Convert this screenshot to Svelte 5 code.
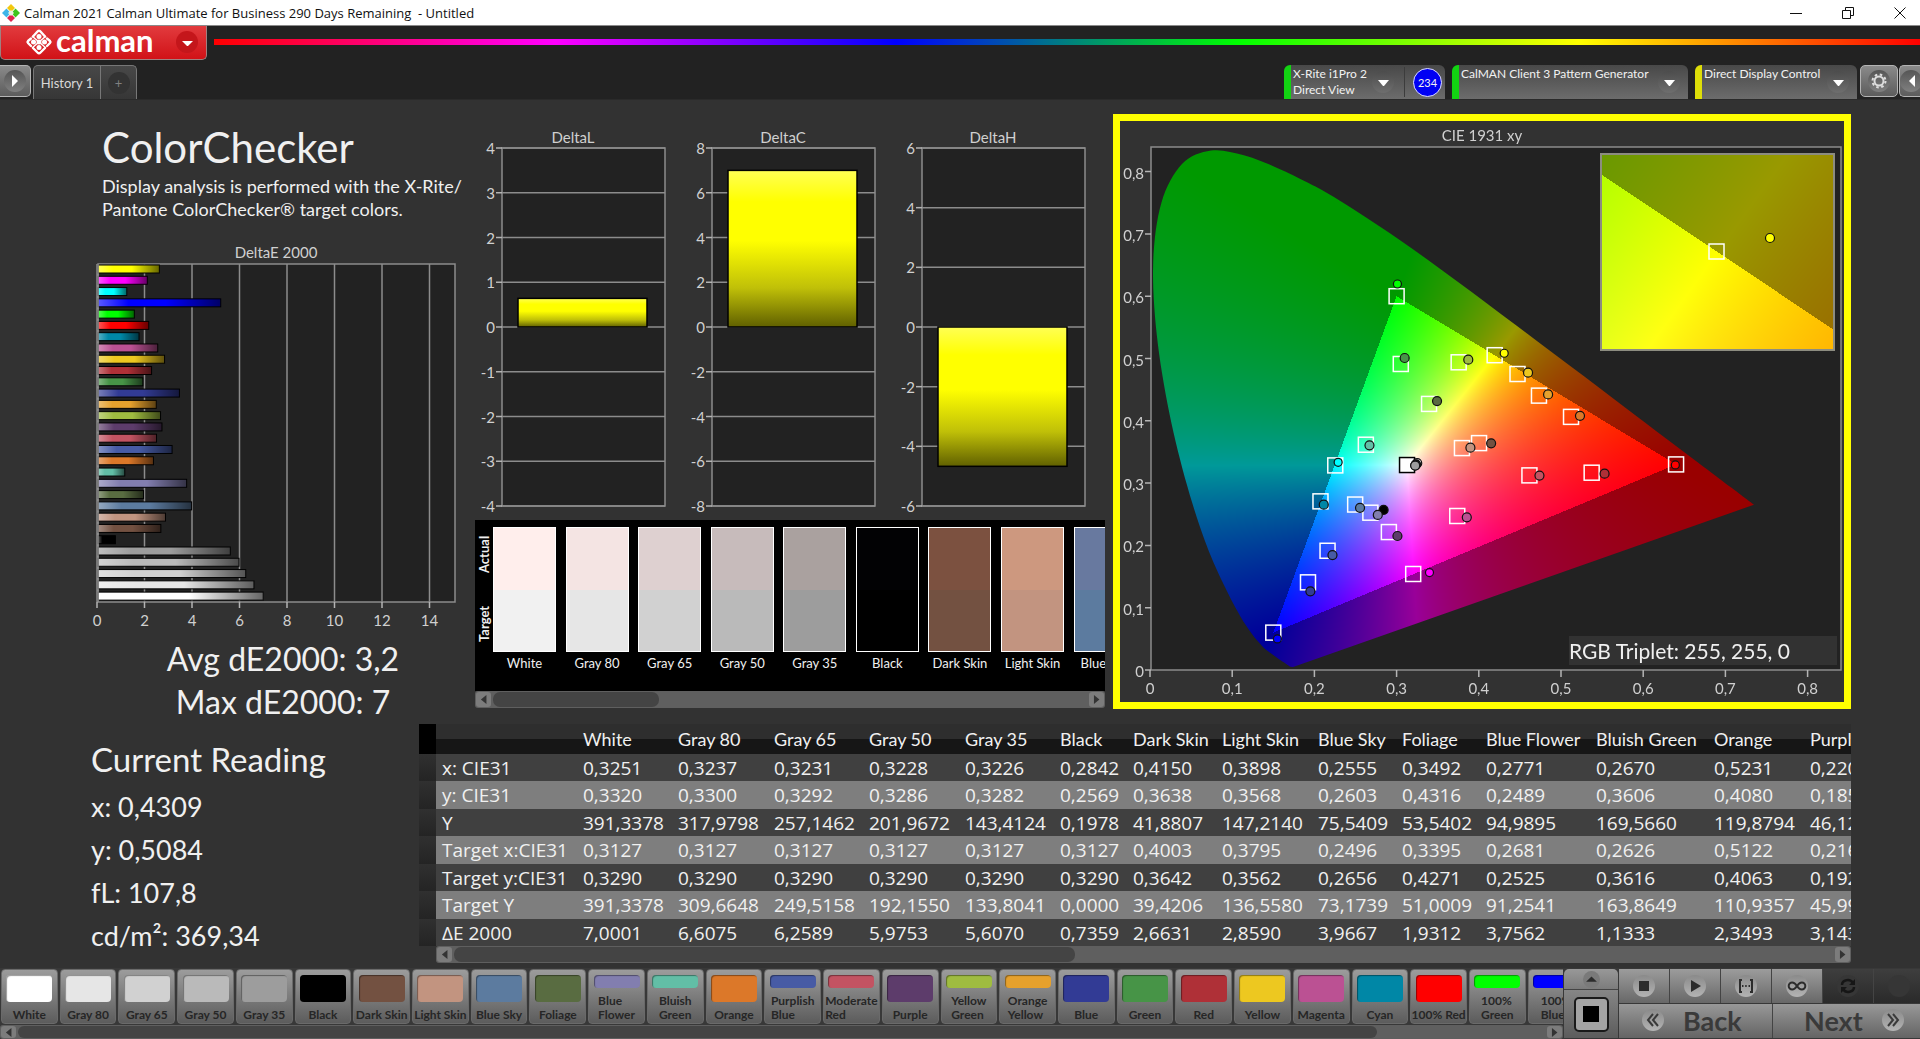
<script>
  import { onMount } from 'svelte';

  // target / actual are CIE 1931 xy pairs
  const patches = [
    { name: 'White', color: '#ffffff', de: 7.0001, target: [0.3127, 0.329], actual: [0.3251, 0.332] },
    { name: 'Gray 80', color: '#e6e6e6', de: 6.6075, target: [0.3127, 0.329], actual: [0.3237, 0.33] },
    { name: 'Gray 65', color: '#d1d1d1', de: 6.2589, target: [0.3127, 0.329], actual: [0.3231, 0.3292] },
    { name: 'Gray 50', color: '#bababa', de: 5.9753, target: [0.3127, 0.329], actual: [0.3228, 0.3286] },
    { name: 'Gray 35', color: '#9d9d9d', de: 5.607, target: [0.3127, 0.329], actual: [0.3226, 0.3282] },
    { name: 'Black', color: '#000000', de: 0.7359, target: [0.3127, 0.329], actual: [0.2842, 0.2569] },
    { name: 'Dark Skin', color: '#735141', de: 2.6631, target: [0.4003, 0.3642], actual: [0.415, 0.3638] },
    { name: 'Light Skin', color: '#c29480', de: 2.859, target: [0.3795, 0.3562], actual: [0.3898, 0.3568] },
    { name: 'Blue Sky', color: '#5c7b9f', de: 3.9667, target: [0.2496, 0.2656], actual: [0.2555, 0.2603] },
    { name: 'Foliage', color: '#596c41', de: 1.9312, target: [0.3395, 0.4271], actual: [0.3492, 0.4316] },
    { name: 'Blue\nFlower', color: '#827eaf', de: 3.7562, target: [0.2681, 0.2525], actual: [0.2771, 0.2489] },
    { name: 'Bluish\nGreen', color: '#62bea6', de: 1.1333, target: [0.2626, 0.3616], actual: [0.267, 0.3606] },
    { name: 'Orange', color: '#dc7829', de: 2.3493, target: [0.5122, 0.4063], actual: [0.5231, 0.408] },
    { name: 'Purplish\nBlue', color: '#475ba5', de: 3.14, target: [0.216, 0.1914], actual: [0.222, 0.1844] },
    { name: 'Moderate\nRed', color: '#c35362', de: 2.48, target: [0.4616, 0.3124], actual: [0.4738, 0.3121] },
    { name: 'Purple', color: '#5d3c6b', de: 2.71, target: [0.2906, 0.2214], actual: [0.301, 0.2151] },
    { name: 'Yellow\nGreen', color: '#9fbc40', de: 2.65, target: [0.3755, 0.4939], actual: [0.3872, 0.4981] },
    { name: 'Orange\nYellow', color: '#e6a12d', de: 2.47, target: [0.4732, 0.4404], actual: [0.4843, 0.4424] },
    { name: 'Blue', color: '#323b95', de: 3.45, target: [0.1922, 0.1407], actual: [0.1951, 0.1263] },
    { name: 'Green', color: '#479447', de: 1.9, target: [0.3051, 0.4912], actual: [0.3098, 0.5008] },
    { name: 'Red', color: '#af3037', de: 2.27, target: [0.5373, 0.3167], actual: [0.553, 0.3151] },
    { name: 'Yellow', color: '#edc820', de: 2.82, target: [0.4471, 0.4751], actual: [0.4599, 0.4772] },
    { name: 'Magenta', color: '#bb5193', de: 2.53, target: [0.3738, 0.2472], actual: [0.3854, 0.2451] },
    { name: 'Cyan', color: '#0087a6', de: 1.74, target: [0.2074, 0.2707], actual: [0.2114, 0.2654] },
    { name: '100% Red', color: '#ff0000', de: 2.15, target: [0.64, 0.33], actual: [0.6391, 0.3291] },
    { name: '100%\nGreen', color: '#00ff00', de: 1.54, target: [0.3, 0.6], actual: [0.301, 0.6196] },
    { name: '100%\nBlue', color: '#0000ff', de: 5.2, target: [0.15, 0.06], actual: [0.155, 0.0498] },
    { name: '100%\nCyan', color: '#00ffff', de: 1.22, target: [0.2254, 0.3284], actual: [0.2289, 0.3334] },
    { name: '100%\nMagenta', color: '#ff00ff', de: 2.09, target: [0.3202, 0.1541], actual: [0.34, 0.1564] },
    { name: '100%\nYellow', color: '#ffff00', de: 2.6, target: [0.4193, 0.5053], actual: [0.4309, 0.5084] }
  ];

  const bars = [...patches].reverse();

  const deltas = [
    { name: 'DeltaL', max: 4, step: 1, value: 0.64 },
    { name: 'DeltaC', max: 8, step: 2, value: 7 },
    { name: 'DeltaH', max: 6, step: 2, value: -4.67 }
  ];

  const swatches = [
    { name: 'White', actual: '#ffeeec', target: '#f1f1f1' },
    { name: 'Gray 80', actual: '#f4e4e3', target: '#e6e6e6' },
    { name: 'Gray 65', actual: '#ded0d0', target: '#d1d1d1' },
    { name: 'Gray 50', actual: '#c7bbbb', target: '#bababa' },
    { name: 'Gray 35', actual: '#aaa19f', target: '#9d9d9d' },
    { name: 'Black', actual: '#020204', target: '#000000' },
    { name: 'Dark Skin', actual: '#7c5140', target: '#735141' },
    { name: 'Light Skin', actual: '#cd987f', target: '#c29480' },
    { name: 'Blue Sky', actual: '#68799f', target: '#5c7b9f' }
  ];

  const columns = ['White', 'Gray 80', 'Gray 65', 'Gray 50', 'Gray 35', 'Black', 'Dark Skin', 'Light Skin', 'Blue Sky', 'Foliage', 'Blue Flower', 'Bluish Green', 'Orange', 'Purplish Blue'];
  const columnWidths = [17, 141, 95, 96, 95, 96, 95, 73, 89, 96, 84, 84, 110, 118, 96, 120];

  const rows = [
    ['x: CIE31', '0,3251', '0,3237', '0,3231', '0,3228', '0,3226', '0,2842', '0,4150', '0,3898', '0,2555', '0,3492', '0,2771', '0,2670', '0,5231', '0,2207'],
    ['y: CIE31', '0,3320', '0,3300', '0,3292', '0,3286', '0,3282', '0,2569', '0,3638', '0,3568', '0,2603', '0,4316', '0,2489', '0,3606', '0,4080', '0,1856'],
    ['Y', '391,3378', '317,9798', '257,1462', '201,9672', '143,4124', '0,1978', '41,8807', '147,2140', '75,5409', '53,5402', '94,9895', '169,5660', '119,8794', '46,1280'],
    ['Target x:CIE31', '0,3127', '0,3127', '0,3127', '0,3127', '0,3127', '0,3127', '0,4003', '0,3795', '0,2496', '0,3395', '0,2681', '0,2626', '0,5122', '0,2160'],
    ['Target y:CIE31', '0,3290', '0,3290', '0,3290', '0,3290', '0,3290', '0,3290', '0,3642', '0,3562', '0,2656', '0,4271', '0,2525', '0,3616', '0,4063', '0,1920'],
    ['Target Y', '391,3378', '309,6648', '249,5158', '192,1550', '133,8041', '0,0000', '39,4206', '136,5580', '73,1739', '51,0009', '91,2541', '163,8649', '110,9357', '45,9900'],
    ['ΔE 2000', '7,0001', '6,6075', '6,2589', '5,9753', '5,6070', '0,7359', '2,6631', '2,8590', '3,9667', '1,9312', '3,7562', '1,1333', '2,3493', '3,1430']
  ];

  const readings = ['x: 0,4309', 'y: 0,5084', 'fL: 107,8', 'cd/m²: 369,34'];

  // spectral locus, 380 to 700 nm
  const locus = [
    [0.1741, 0.005], [0.1714, 0.0051], [0.1689, 0.0069], [0.1644, 0.0109], [0.1566, 0.0177], [0.144, 0.0297],
    [0.1355, 0.0399], [0.1241, 0.0578], [0.1096, 0.0868], [0.0913, 0.1327], [0.0687, 0.2007], [0.0454, 0.295],
    [0.0235, 0.4127], [0.0082, 0.5384], [0.0039, 0.6548], [0.0139, 0.7502], [0.0389, 0.812], [0.0743, 0.8338],
    [0.1142, 0.8262], [0.1547, 0.8059], [0.1929, 0.7816], [0.2296, 0.7543], [0.3016, 0.6923], [0.3731, 0.6245],
    [0.4441, 0.5547], [0.5125, 0.4866], [0.5752, 0.4242], [0.627, 0.3725], [0.6658, 0.334], [0.6915, 0.3083],
    [0.7079, 0.292], [0.719, 0.2809], [0.726, 0.274], [0.7347, 0.2653]
  ];

  const W = 724;
  const H = 581;
  const inset = { x: 481, y: 33, w: 233, h: 196, cx: 0.4193, cy: 0.5053, span: 0.05 };

  const px = (x) => 30 + x * 822;
  const py = (y) => 549 - y * 623;

  let canvas;

  function xyColor(x, y) {
    if (y < 0.001) y = 0.001;
    const X = x / y;
    const Z = (1 - x - y) / y;
    const rgb = [
      3.2406 * X - 1.5372 - 0.4986 * Z,
      -0.9689 * X + 1.8758 + 0.0415 * Z,
      0.0557 * X - 0.204 + 1.057 * Z
    ];
    const outside = Math.min(...rgb) < 0;
    const peak = Math.max(...rgb);
    const scale = outside ? 153 : 255;
    return rgb.map((c) => (scale * Math.max(c, 0)) / peak);
  }

  function paint(w, h, toXY) {
    const layer = document.createElement('canvas');
    layer.width = w;
    layer.height = h;
    const ctx = layer.getContext('2d');
    const img = ctx.createImageData(w, h);
    for (let j = 0; j < h; j++) {
      for (let i = 0; i < w; i++) {
        const [x, y] = toXY(i + 0.5, j + 0.5);
        const [r, g, b] = xyColor(x, y);
        const k = (j * w + i) * 4;
        img.data[k] = r;
        img.data[k + 1] = g;
        img.data[k + 2] = b;
        img.data[k + 3] = 255;
      }
    }
    ctx.putImageData(img, 0, 0);
    return layer;
  }

  onMount(() => {
    const ctx = canvas.getContext('2d');
    const pts = locus.map(([x, y]) => [px(x), py(y)]);
    ctx.save();
    ctx.beginPath();
    ctx.moveTo(...pts[0]);
    // Catmull-Rom through every locus point
    for (let i = 0; i < pts.length - 1; i++) {
      const a = pts[Math.max(i - 1, 0)];
      const b = pts[i];
      const c = pts[i + 1];
      const d = pts[Math.min(i + 2, pts.length - 1)];
      ctx.bezierCurveTo(
        b[0] + (c[0] - a[0]) / 6, b[1] + (c[1] - a[1]) / 6,
        c[0] - (d[0] - b[0]) / 6, c[1] - (d[1] - b[1]) / 6,
        c[0], c[1]
      );
    }
    ctx.closePath();
    ctx.clip();
    ctx.drawImage(paint(W, H, (i, j) => [(i - 30) / 822, (549 - j) / 623]), 0, 0);
    ctx.restore();

    const zoomed = paint(inset.w, inset.h, (i, j) => [
      inset.cx + (i / inset.w - 0.5) * inset.span,
      inset.cy - (j / inset.h - 0.5) * inset.span
    ]);
    ctx.drawImage(zoomed, inset.x, inset.y);
  });

  function ticks(d) {
    const out = [];
    for (let v = d.max; v >= -d.max; v -= d.step) out.push(v);
    return out;
  }

  const dy = (d, v) => 201 - (v / d.max) * 179;
  const label = (v) => String(v).replace('.', ',');
</script>

{#snippet scrollbar(name, size)}
  <div class="scrollbar">
    <button type="button" class="arrow" aria-label="Scroll {name} left">
      <svg viewBox="0 0 8 12"><path d="M7 1v10L1 6z" /></svg>
    </button>
    <div class="track"><div class="thumb" style="width: {size}%"></div></div>
    <button type="button" class="arrow" aria-label="Scroll {name} right">
      <svg viewBox="0 0 8 12"><path d="M1 1v10l6-5z" /></svg>
    </button>
  </div>
{/snippet}

{#snippet caret()}
  <span class="caret"><svg viewBox="0 0 22 22"><path d="M6 9h11l-5 6h-1z" /></svg></span>
{/snippet}

<div class="app">
  <header class="titlebar">
    <svg class="app-icon" viewBox="0 0 18 18">
      <path d="M9 0l4 4-4 4-4-4z" fill="#f2c80f" />
      <path d="M4.500 4.500l4 4.500-4 4.500L0 9z" fill="#3fb4e8" />
      <path d="M13.500 4.500L18 9l-4.500 4.500-4-4.500z" fill="#3fc41c" />
      <path d="M9 10l4 4-4 4-4-4z" fill="#e0244f" />
      <path d="M9 6l3 3-3 3-3-3z" fill="#e9efe0" />
    </svg>
    <span class="caption">Calman 2021 Calman Ultimate for Business 290 Days Remaining&nbsp; - Untitled</span>
    <button type="button" aria-label="Minimize"><svg viewBox="0 0 12 12"><path d="M0 6.500h12" /></svg></button>
    <button type="button" aria-label="Restore"><svg viewBox="0 0 12 12"><path d="M0.500 3.500h8v8h-8zM3.500 3.500v-3h8v8h-3" /></svg></button>
    <button type="button" aria-label="Close"><svg viewBox="0 0 12 12"><path d="M0.500 0.500l11 11M11.500 0.500l-11 11" /></svg></button>
  </header>

  <div class="brand-row">
    <button type="button" class="brand">
      <svg class="brand-mark" viewBox="0 0 28 28">
        <path
          d="M8 8.500L12.500 3.500Q14 2 15.500 3.500L20 8.500M22 10.500L25 13Q26 14 25 15L22 18M20 20L15.500 24.500Q14 26 12.500 24.500L8 20M6 18L3 15Q2 14 3 13L6 10.500"
          fill="none"
          stroke="#fff"
          stroke-width="2.400"
          stroke-linejoin="round"
          stroke-linecap="round"
        />
        <path d="M7 8l14 12M21 8L7 20" stroke="#fff" stroke-width="1.500" />
        <g fill="#fff">
          <circle cx="14" cy="8.500" r="2.500" /><circle cx="8.500" cy="14" r="2.500" /><circle cx="14" cy="14" r="2.500" />
          <circle cx="19.500" cy="14" r="2.500" /><circle cx="14" cy="19.500" r="2.500" />
        </g>
      </svg>
      <span class="wordmark">calman</span>
      <span class="brand-caret"><svg viewBox="0 0 22 22"><path d="M6 10h11l-5 5h-1z" /></svg></span>
    </button>
    <div class="rainbow"></div>
  </div>

  <div class="tabs">
    <button type="button" class="side-button left" aria-label="Open panel">
      <span class="knob"><svg viewBox="0 0 22 22"><path d="M8 5v12l6-6z" fill="#fff" /></svg></span>
    </button>
    <div class="tab-group">
      <button type="button" class="tab">History 1</button>
      <button type="button" class="tab add" aria-label="Add history"><span>+</span></button>
    </div>
    <div class="devices">
      <button type="button" class="device meter">
        <span class="device-text">X-Rite i1Pro 2<br />Direct View</span>
        {@render caret()}
        <span class="count"><b>234</b></span>
      </button>
      <button type="button" class="device source">
        <span class="device-text">CalMAN Client 3 Pattern Generator</span>
        {@render caret()}
      </button>
      <button type="button" class="device display">
        <span class="device-text">Direct Display Control</span>
        {@render caret()}
      </button>
    </div>
    <button type="button" class="side-button" aria-label="Settings">
      <span class="knob">
        <svg viewBox="0 0 22 22" fill="none" stroke="#ddd">
          <circle cx="11" cy="11" r="4.500" stroke-width="2" />
          <circle cx="11" cy="11" r="6.500" stroke-width="2" stroke-dasharray="2.550 2.550" />
        </svg>
      </span>
    </button>
    <button type="button" class="side-button cut" aria-label="Collapse panel">
      <span class="knob"><svg viewBox="0 0 22 22"><path d="M15 5v12l-6-6z" fill="#fff" /></svg></span>
    </button>
  </div>

  <main>
    <div class="upper">
      <section class="summary">
        <h1>ColorChecker</h1>
        <p class="intro">Display analysis is performed with the X-Rite/<br />Pantone ColorChecker® target colors.</p>

        <svg class="chart delta-e" width="475" height="394" viewBox="0 0 475 394">
          <defs>
            <linearGradient id="sheen-x">
              <stop offset="0" stop-color="#fff" stop-opacity="0.350" />
              <stop offset="0.250" stop-color="#fff" stop-opacity="0" />
              <stop offset="0.550" stop-color="#000" stop-opacity="0" />
              <stop offset="1" stop-color="#000" stop-opacity="0.600" />
            </linearGradient>
          </defs>
          <text x="276" y="18" text-anchor="middle">DeltaE 2000</text>
          <rect class="plot" x="98" y="24" width="357" height="338" />
          {#each [0, 2, 4, 6, 8, 10, 12, 14] as v}
            <path class="grid" d="M{97 + v * 23.75} 24V362" />
            <path class="tick" d="M{97 + v * 23.75} 362v6" />
            <text x={97 + v * 23.75} y="386" text-anchor="middle">{v}</text>
          {/each}
          {#each bars as p, i}
            <rect x="98" y={25 + i * 11.28} width={p.de * 23.6} height="8" fill={p.color} />
            <rect x="98" y={25 + i * 11.28} width={p.de * 23.6} height="8" fill="url(#sheen-x)" stroke="#000" stroke-width="1" />
          {/each}
          <path class="grid" d="M98 24V362" />
        </svg>

        <p class="total">Avg dE2000: 3,2</p>
        <p class="total">Max dE2000: 7</p>
      </section>

      <section class="middle">
        <div class="delta-charts">
          {#each deltas as d}
            <svg class="chart" width="196" height="394" viewBox="0 0 196 394">
              <defs>
                <linearGradient id="yellow-{d.name}" x2="0" y2="1">
                  <stop offset="0" stop-color="#ffff54" />
                  <stop offset="0.200" stop-color="#ffff00" />
                  <stop offset="0.450" stop-color="#ffff00" />
                  <stop offset="0.750" stop-color="#c0c008" />
                  <stop offset="1" stop-color="#606000" />
                </linearGradient>
              </defs>
              <text x="98" y="17" text-anchor="middle">{d.name}</text>
              <rect class="plot" x="27" y="22" width="163" height="358" />
              {#each ticks(d) as v}
                <path class="grid" d="M27 {dy(d, v)}H190" />
                <path class="tick" d="M21 {dy(d, v)}h6" />
                <text x="20" y={dy(d, v) + 6} text-anchor="end">{v}</text>
              {/each}
              <rect
                x="43"
                y={dy(d, Math.max(d.value, 0))}
                width="129"
                height={(Math.abs(d.value) / d.max) * 179}
                fill="url(#yellow-{d.name})"
                stroke="#000"
                stroke-width="1.500"
              />
            </svg>
          {/each}
        </div>

        <div class="swatch-panel">
          <div class="swatch-sides"><span>Actual</span><span>Target</span></div>
          <div class="swatch-list">
            {#each swatches as s}
              <div class="swatch">
                <div class="pair" style="background: linear-gradient({s.actual} 50%, {s.target} 50%)"></div>
                <span>{s.name}</span>
              </div>
            {/each}
          </div>
        </div>
        {@render scrollbar('swatches', 28)}
      </section>

      <section class="cie">
        <canvas bind:this={canvas} width={W} height={H}></canvas>
        <svg class="chart" viewBox="0 0 {W} {H}">
          <text x="362" y="20" text-anchor="middle">CIE 1931 xy</text>
          <rect class="frame" x="31" y="26" width="690" height="523" />
          {#each [0, 0.1, 0.2, 0.3, 0.4, 0.5, 0.6, 0.7, 0.8] as v}
            <path class="tick" d="M{px(v)} 549v7M31 {py(v)}h-6" />
            <text x={px(v)} y="573" text-anchor="middle">{label(v)}</text>
            <text x="24" y={py(v) + 7} text-anchor="end">{label(v)}</text>
          {/each}

          {#each patches.slice(6) as p}
            <rect class="target" x={px(p.target[0]) - 7.5} y={py(p.target[1]) - 7.5} width="15" height="15" />
          {/each}
          {#each patches.slice(5) as p}
            <circle class="actual" cx={px(p.actual[0])} cy={py(p.actual[1])} r={p.name.includes('100%') ? 4 : 4.5} fill={p.color} />
          {/each}
          <rect class="target dark" x={px(0.3127) - 7.5} y={py(0.329) - 7.5} width="15" height="15" />
          {#each patches.slice(0, 5) as p}
            <circle class="actual" cx={px(p.actual[0])} cy={py(p.actual[1])} r="4.500" fill={p.color} />
          {/each}

          <rect class="inset" x={inset.x} y={inset.y} width={inset.w} height={inset.h} />
          <rect class="target" x="589" y="123" width="15" height="15" />
          <circle class="actual" cx="650" cy="117" r="4.500" fill="#ffff00" />

          <rect class="triplet-box" x="449" y="515" width="268" height="29" />
          <text class="triplet" x="449" y="538">RGB Triplet: 255, 255, 0</text>
        </svg>
      </section>
    </div>

    <div class="lower">
      <section class="readings">
        <h2>Current Reading</h2>
        {#each readings as r}
          <p>{r}</p>
        {/each}
      </section>

      <section class="data">
        <div class="table-clip">
          <table>
            <colgroup>
              {#each columnWidths as w}
                <col style="width: {w}px" />
              {/each}
            </colgroup>
            <thead>
              <tr>
                <th class="gutter"></th>
                <th></th>
                {#each columns as c}
                  <th scope="col">{c}</th>
                {/each}
              </tr>
            </thead>
            <tbody>
              {#each rows as row}
                <tr>
                  <td class="gutter"></td>
                  {#each row as cell}
                    <td>{cell}</td>
                  {/each}
                </tr>
              {/each}
            </tbody>
          </table>
        </div>
        <div class="data-scroll">{@render scrollbar('table', 45)}</div>
      </section>
    </div>
  </main>

  <footer>
    <div class="palette">
      <div class="patches">
        {#each patches as p}
          <button type="button" class="patch">
            <span class="well" style="background: {p.color}"></span>
            <span class="patch-name">{p.name}</span>
          </button>
        {/each}
      </div>
      {@render scrollbar('patches', 89)}
    </div>

    <div class="window-pick">
      <button type="button" class="up" aria-label="More patterns">
        <span class="round small"><svg viewBox="0 0 22 22"><path d="M4 14l7-7 7 7z" /></svg></span>
      </button>
      <button type="button" class="pattern" aria-label="Window pattern"><span><i></i></span></button>
    </div>

    <div class="controls">
      <div class="transport">
        <button type="button" aria-label="Stop"><span class="round"><svg viewBox="0 0 22 22"><path d="M6 6h10v10H6z" /></svg></span></button>
        <button type="button" aria-label="Play"><span class="round"><svg viewBox="0 0 22 22"><path d="M7 5l10 6-10 6z" /></svg></span></button>
        <button type="button" aria-label="Read series">
          <span class="round"><svg viewBox="0 0 22 22"><path d="M7 5H5v12h2M15 5h2v12h-2M7 11h1.500M10.200 11h1.500M13.500 11h1.500" fill="none" stroke="#2c2c2c" stroke-width="2" /></svg></span>
        </button>
        <button type="button" aria-label="Read continuously">
          <span class="round"><svg viewBox="0 0 22 22"><path d="M11 11C9 8 7.500 7.500 6.200 7.500a3.500 3.500 0 000 7C7.500 14.500 9 14 11 11s3.500-3.500 4.800-3.500a3.500 3.500 0 010 7C14.500 14.500 13 14 11 11z" fill="none" stroke="#2c2c2c" stroke-width="2" /></svg></span>
        </button>
        <button type="button" class="off" aria-label="Refresh">
          <span class="round"><svg viewBox="0 0 22 22"><path d="M5 10c0-5 8-7 11-2M17 12c0 5-8 7-11 2" fill="none" stroke="#161616" stroke-width="2.500" /><path d="M18 4v6h-6zM4 18v-6h6z" fill="#161616" /></svg></span>
        </button>
        <button type="button" class="off" aria-label="Record"><span class="round"></span></button>
      </div>
      <div class="nav">
        <button type="button">
          <span class="round"><svg viewBox="0 0 22 22"><path d="M11 5l-5 6 5 6M16 5l-5 6 5 6" fill="none" stroke="#3a3a3a" stroke-width="2" /></svg></span>
          Back
        </button>
        <button type="button" class="next">
          Next
          <span class="round"><svg viewBox="0 0 22 22"><path d="M6 5l5 6-5 6M11 5l5 6-5 6" fill="none" stroke="#3a3a3a" stroke-width="2" /></svg></span>
        </button>
      </div>
    </div>
  </footer>
</div>

<style>
  :global(body) {
    margin: 0;
    background: #323232;
  }

  .app {
    display: flex;
    flex-direction: column;
    min-height: 100vh;
    overflow: hidden;
    background: #323232;
    color: #f0f0f0;
    font-family: Lato, 'Liberation Sans', sans-serif;
  }

  .app * { box-sizing: border-box; }

  button {
    margin: 0;
    padding: 0;
    border: 0;
    background: none;
    color: inherit;
    font: inherit;
    cursor: pointer;
  }

  svg { display: block; }

  h1, h2, p { margin: 0; font-weight: 400; }

  /* title bar */
  .titlebar {
    display: flex;
    align-items: center;
    height: 26px;
    padding-left: 2px;
    border-bottom: 1px solid #8a8a8a;
    background: #fff;
    color: #111;
    font-family: 'Open Sans', 'Noto Sans', sans-serif;
    font-size: 13px;
  }

  .app-icon { width: 18px; height: 18px; margin-right: 4px; }

  .caption { flex: 1; white-space: nowrap; }

  .titlebar button {
    display: flex;
    justify-content: center;
    width: 52px;
  }

  .titlebar button:last-child { width: 46px; padding-left: 6px; }

  .titlebar button svg {
    width: 12px;
    height: 12px;
    fill: none;
    stroke: #111;
    stroke-width: 1;
  }

  /* brand */
  .brand-row {
    display: flex;
    height: 39px;
    background: #222;
  }

  .brand {
    display: flex;
    align-items: center;
    width: 207px;
    height: 34px;
    padding: 0 8px 2px 24px;
    border: 1px solid #a08080;
    border-top: 0;
    border-radius: 0 0 5px 5px;
    background: linear-gradient(#e23b3e, #d11217);
    color: #fff;
  }

  .brand-mark { width: 28px; height: 28px; }

  .wordmark {
    flex: 1;
    padding: 0 0 4px 3px;
    font-size: 31px;
    font-weight: 700;
    line-height: 28px;
    text-align: left;
  }

  .brand-caret {
    width: 22px;
    height: 22px;
    border-radius: 50%;
    background: #c4161b;
  }

  .brand-caret svg, .caret svg { fill: #fff; }

  .rainbow {
    flex: 1;
    height: 6px;
    margin: 13px 0 0 7px;
    background: linear-gradient(90deg, #f00, #f0f, #00f, #0f0, #ff0, #f00);
  }

  /* tabs */
  .tabs {
    display: flex;
    height: 34px;
    background: #222;
  }

  .side-button {
    display: flex;
    align-items: center;
    justify-content: center;
    width: 38px;
    height: 32px;
    border: 1px solid #b4b4b4;
    border-radius: 5px;
    background: linear-gradient(#8a8a8a, #5c5c5c);
  }

  .side-button.left {
    width: 31px;
    border-left: 0;
    border-radius: 0 5px 5px 0;
  }

  .side-button.cut {
    justify-content: flex-start;
    width: 21px;
    margin-left: 1px;
    border-right: 0;
    border-radius: 5px 0 0 5px;
    overflow: hidden;
  }

  .knob {
    flex: none;
    width: 22px;
    height: 22px;
    border-radius: 50%;
    background: linear-gradient(#555, #808080);
  }

  .tab-group {
    display: flex;
    margin-left: 2px;
    border: 1px solid #777;
    border-bottom: 0;
    border-radius: 5px 5px 0 0;
    background: linear-gradient(#484848, #363636);
  }

  .tab {
    width: 66px;
    color: #d8d8d8;
    font-size: 13px;
    white-space: nowrap;
  }

  .tab.add {
    display: flex;
    align-items: center;
    justify-content: center;
    width: 36px;
    border-left: 1px solid #777;
  }

  .tab.add span {
    width: 22px;
    height: 22px;
    border-radius: 50%;
    background: #333;
    color: #808080;
    font-size: 13px;
    line-height: 22px;
  }

  .devices {
    display: flex;
    gap: 7px;
    margin-left: auto;
    padding-right: 3px;
  }

  .device {
    display: flex;
    align-items: center;
    padding: 0 8px 0 2px;
    border-left: 7px solid #12d312;
    border-radius: 6px 6px 0 0;
    background: linear-gradient(#484848, #6c6c6c);
    color: #f2f2f2;
    font-size: 12px;
  }

  .device.meter { width: 161px; padding-right: 3px; }
  .device.source { width: 236px; }
  .device.display { width: 162px; border-left-color: #dede08; }

  .device-text {
    flex: 1;
    align-self: flex-start;
    padding-top: 1px;
    line-height: 16px;
    text-align: left;
    white-space: nowrap;
  }

  .caret {
    width: 22px;
    height: 22px;
    border-radius: 50%;
    background: linear-gradient(#4c4c4c, #6e6e6e);
  }

  .count {
    display: flex;
    align-items: center;
    height: 30px;
    margin-left: 10px;
    padding-left: 8px;
    border-left: 1px solid #3c3c3c;
  }

  .count b {
    width: 29px;
    height: 29px;
    border: 1px solid #e0e0ff;
    border-radius: 50%;
    background: #0000f4;
    font-size: 11px;
    font-weight: 400;
    line-height: 27px;
    text-align: center;
  }

  /* workspace */
  main {
    flex: 1;
    padding-right: 69px;
    border-top: 1px solid #2a2a2a;
  }

  .upper {
    display: grid;
    grid-template-columns: 475px 630px minmax(0, 1fr);
  }

  .summary { padding: 22px 0 1px; }

  h1 {
    padding-left: 102px;
    font-size: 42px;
    line-height: 50px;
  }

  .intro {
    margin: 3px 0 19px;
    padding-left: 102px;
    font-size: 18px;
    line-height: 23px;
    white-space: nowrap;
  }

  .total {
    padding-left: 91px;
    font-size: 32px;
    line-height: 43px;
    text-align: center;
  }

  .chart {
    fill: #d0d0d0;
    font-size: 15px;
  }

  .delta-e { margin-bottom: 3px; }

  .plot { fill: #222; stroke: #8c8c8c; stroke-width: 1.5; }
  .frame { fill: none; stroke: #8c8c8c; stroke-width: 1.5; }
  .grid { stroke: #8c8c8c; stroke-width: 1.5; }
  .tick { stroke: #b4b4b4; stroke-width: 1.5; }

  .middle { padding-top: 26px; }

  .delta-charts { display: flex; gap: 14px; }

  .swatch-panel {
    display: flex;
    height: 171px;
    background: #000;
    overflow: hidden;
  }

  .swatch-sides {
    display: flex;
    flex: none;
    flex-direction: column;
    width: 18px;
    height: 138px;
  }

  .swatch-sides span {
    flex: 1;
    font-size: 13px;
    font-weight: 700;
    line-height: 18px;
    text-align: center;
    writing-mode: vertical-rl;
    transform: rotate(180deg);
  }

  .swatch-list {
    display: grid;
    flex: 1;
    grid-auto-flow: column;
    grid-auto-columns: 11.86%;
    padding-top: 7px;
    overflow: hidden;
  }

  .swatch { font-size: 13px; white-space: nowrap; }

  .pair {
    width: 63px;
    height: 125px;
    border: 1px solid #fff;
  }

  .swatch span {
    display: block;
    width: 63px;
    line-height: 23px;
    text-align: center;
  }

  .scrollbar {
    display: flex;
    height: 17px;
    padding: 1px;
    gap: 2px;
    border-radius: 3px;
    background: #5f5f5f;
  }

  .arrow {
    display: flex;
    flex: none;
    align-items: center;
    justify-content: center;
    width: 15px;
    border-radius: 3px;
    background: #7c7c7c;
  }

  .arrow svg { height: 11px; fill: #333; }

  .track { flex: 1; }

  .thumb {
    height: 100%;
    border-radius: 7px;
    background: #444;
  }

  .cie {
    display: grid;
    align-self: start;
    margin: 14px 0 0 8px;
    border: 7px solid #ffff00;
    background: linear-gradient(#222, #222) 31px 26px / calc(100% - 34px) calc(100% - 58px) no-repeat;
  }

  .cie canvas, .cie svg {
    grid-area: 1 / 1;
    width: 100%;
    height: auto;
  }

  .target { fill: none; stroke: #fff; stroke-width: 1.5; }
  .target.dark { fill: #fff; stroke: #000; }
  .actual { stroke: #111; stroke-width: 1.2; }
  .inset { fill: none; stroke: #8c8c80; stroke-width: 2; }
  .triplet-box { fill: #323232; }
  .triplet { fill: #f0f0f0; font-size: 21px; }

  .lower { display: flex; }

  .readings {
    flex: none;
    width: 419px;
    padding: 13px 0 0 91px;
  }

  h2 {
    margin-bottom: 4px;
    font-size: 33px;
    line-height: 44px;
  }

  .readings p { font-size: 27px; line-height: 43px; }

  .data { flex: 1; min-width: 0; }

  .table-clip { overflow: hidden; }

  table {
    width: 1505px;
    border-collapse: collapse;
    table-layout: fixed;
    font-family: 'Open Sans', 'Noto Sans', sans-serif;
    font-size: 19px;
  }

  th, td {
    padding: 0 0 0 6px;
    line-height: 26px;
    text-align: left;
    white-space: nowrap;
  }

  th {
    height: 30px;
    font-family: Lato, sans-serif;
    font-size: 18px;
    font-weight: 400;
  }

  thead tr { background: linear-gradient(#2e2e2e 50%, #161616 50%); }

  tbody tr { height: 27px; background: #404040; }
  tbody tr:nth-child(even) { height: 28px; background: #7e7e7e; }

  thead .gutter { background: #000; }
  tbody .gutter { background: linear-gradient(#303030, #242424); }

  .data-scroll { padding-left: 17px; }

  /* bottom bar */
  footer {
    display: flex;
    height: 71px;
    padding-top: 1px;
    background: #383838;
    color: #262626;
  }

  .palette { flex: 1; min-width: 0; }

  .patches {
    display: grid;
    grid-auto-flow: column;
    grid-auto-columns: 3.76%;
    height: 56px;
    padding-left: 1px;
    overflow: hidden;
  }

  .palette .scrollbar { height: 14px; }

  .patch {
    display: flex;
    flex-direction: column;
    align-items: center;
    height: 55px;
    margin-right: 2px;
    padding: 5px 0 1px;
    border: 1px solid #6a6a6a;
    border-radius: 4px;
    background: linear-gradient(#9c9c9c, #5c5c5c);
    overflow: hidden;
  }

  .well {
    flex: 1;
    width: 46px;
    margin-bottom: 6px;
    border-radius: 4px;
    box-shadow: inset 1px 1px 1px rgba(0, 0, 0, 0.4);
  }

  .patch-name {
    font-size: 12px;
    font-weight: 700;
    line-height: 14px;
    text-align: left;
    white-space: pre;
  }

  .window-pick {
    display: flex;
    flex: none;
    flex-direction: column;
    width: 56px;
    padding: 0 1px;
  }

  .up {
    display: flex;
    align-items: center;
    justify-content: center;
    height: 21px;
    border-bottom: 1px solid #444;
    border-radius: 5px 5px 0 0;
    background: linear-gradient(#989898, #7c7c7c);
  }

  .pattern {
    display: flex;
    align-items: center;
    justify-content: center;
    height: 48px;
    background: linear-gradient(#868686, #5c5c5c);
  }

  .pattern span {
    display: flex;
    align-items: center;
    justify-content: center;
    width: 35px;
    height: 35px;
    border: 2px solid #1a1a1a;
    border-radius: 5px;
    background: #a4a4a4;
  }

  .pattern i { width: 16px; height: 16px; background: #000; }

  .controls { flex: none; width: 301px; overflow: hidden; }

  .transport, .nav { display: flex; width: 308px; height: 35px; }

  .transport button {
    display: flex;
    align-items: center;
    justify-content: center;
    width: 51px;
    height: 34px;
    border-right: 1px solid #444;
    background: linear-gradient(#9c9c9c, #686868);
  }

  .transport .off { background: linear-gradient(#3e3e3e, #2a2a2a); }
  .off .round { background: #363636; }

  .round {
    display: block;
    flex: none;
    width: 22px;
    height: 22px;
    border-radius: 50%;
    background: linear-gradient(#8a8a8a, #b4b4b4);
  }

  .round.small { width: 17px; height: 17px; background: #7a7a7a; }

  .round svg { fill: #2c2c2c; }

  .nav button {
    display: flex;
    align-items: center;
    gap: 19px;
    width: 154px;
    height: 34px;
    padding: 0 0 2px 23px;
    border-right: 1px solid #444;
    background: linear-gradient(#989898, #646464);
    color: #3a3a3a;
    font-size: 27px;
    font-weight: 700;
  }

  .nav .next { padding-left: 31px; }
</style>
